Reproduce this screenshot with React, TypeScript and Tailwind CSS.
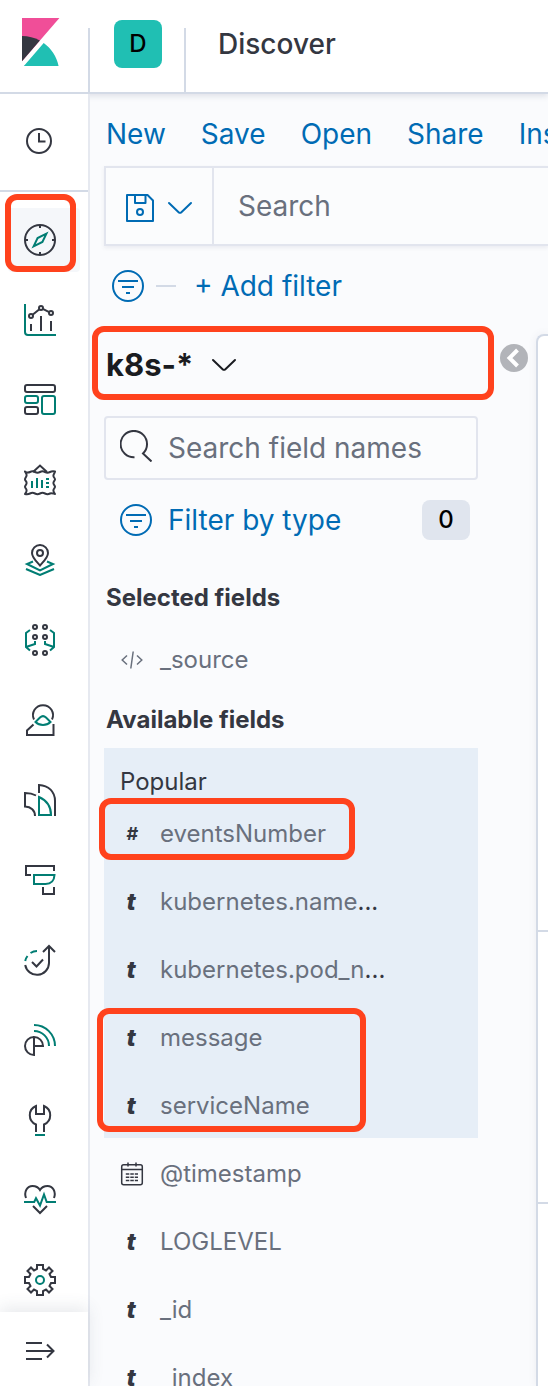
import React from "react";

const DARK = "#343741";
const GREEN = "#017d73";
const BLUE = "#006bb4";

function AppIcon({ children }: { children: React.ReactNode }) {
  return (
    <svg width="32" height="32" viewBox="0 0 32 32" fill="none" stroke={DARK} strokeWidth="2" aria-hidden="true">
      {children}
    </svg>
  );
}

const apps: { name: string; icon: React.ReactNode }[] = [
  {
    name: "Discover",
    icon: (
      <>
        <circle cx="16" cy="16" r="15" />
        <path d="M16 1v3M16 28v3M1 16h3M28 16h3" />
        <path stroke={GREEN} d="M9.6 22.4 13.6 14 22.4 9.6 18.4 18z" />
      </>
    ),
  },
  {
    name: "Visualize",
    icon: (
      <>
        <path stroke={GREEN} d="M1 0v28a3 3 0 0 0 3 3h28" />
        <circle cx="7" cy="12" r="2" />
        <circle cx="17" cy="4" r="2" />
        <circle cx="27" cy="9" r="2" />
        <path d="M8.6 10.7 15.4 5.3M18.8 4.9 25.2 8.1M7 20v7M17 12v15M27 17v10" />
      </>
    ),
  },
  {
    name: "Dashboard",
    icon: (
      <>
        <rect x="1" y="1" width="30" height="7" rx="2" />
        <rect x="1" y="23" width="13" height="7" rx="2" />
        <rect stroke={GREEN} x="1" y="12" width="13" height="7" rx="2" />
        <rect stroke={GREEN} x="18" y="12" width="13" height="18" rx="2" />
      </>
    ),
  },
  {
    name: "Canvas",
    icon: (
      <>
        <path d="M9 8 16 1.5 23 8" />
        <path
          strokeLinejoin="round"
          d="M1 7.500c1.700 1.300 3.500 1.300 5 .5s3.500-.8 5 0 3.500.8 5 0 3.500-.8 5 0 3.500.8 5 0 3.300-.8 5-.5c-.3 1.700-1.600 2.500-1.600 4.200s1.600 2.300 1.600 3.600-1.600 2-1.600 3.700 1.600 2.300 1.600 3.700-1.600 2.300-1.600 3.700.8 2.500 1.600 3.600c-1.700-.3-3.500-1.300-5-.5s-3.500.8-5 0-3.500-.8-5 0-3.500.8-5 0-3.500-.8-5 0-3.300.8-5 .5c.8-1.200 1.600-2.200 1.600-3.600s-1.600-2.300-1.600-3.700 1.600-2 1.600-3.700-1.600-2.300-1.600-3.600 1.600-2.500 1.600-4.200S1.800 9 1 7.500z"
        />
        <path stroke={GREEN} d="M8 17v7M13 14v10M18 16v8M22 15h3M22 19h3M22 23h3" />
      </>
    ),
  },
  {
    name: "Maps",
    icon: (
      <>
        <path d="M16 21.500C12 17 8 13.500 8 9a8 8 0 0 1 16 0c0 4.500-4 8-8 12.500z" />
        <circle cx="16" cy="9" r="3" />
        <path stroke={GREEN} d="M9 17.500 3 20l13 6.500L29 20l-6-2.500M2 25l14 6 14-6" />
      </>
    ),
  },
  {
    name: "Machine Learning",
    icon: (
      <>
        <circle cx="11" cy="3" r="2" />
        <circle cx="21" cy="3" r="2" />
        <circle cx="11" cy="13" r="2" />
        <circle cx="21" cy="13" r="2" />
        <circle cx="11" cy="29" r="2" />
        <circle cx="21" cy="29" r="2" />
        <path stroke={GREEN} d="M6 6 2 9v14l4 3.500M2 23l9-3v-3M26 6l4 3v14l-4 3.500M30 23l-9-3v-3" />
      </>
    ),
  },
  {
    name: "Metrics",
    icon: (
      <>
        <path d="M10 15.500a10 10 0 1 1 18 0" />
        <path d="M9.500 20.500 3 26.500V31h26.500V20" />
        <path stroke={GREEN} d="M11.500 18 16 13.500q3-2.800 6 0L26.500 18c-4 4-11 4-15 0z" />
      </>
    ),
  },
  {
    name: "Logs",
    icon: (
      <>
        <path d="M15 9V1c9.500.5 16 6.500 16 16v15" />
        <path d="M12 11.500C9 9.800 5 9 1 9v13.500c6 .2 10 4 10 9.500" />
        <path stroke={GREEN} d="M15 13v18h12c0-8-4-14.500-12-18z" />
      </>
    ),
  },
  {
    name: "APM",
    icon: (
      <>
        <path d="M30 7V2H2v9h5M19 23v7h11v-7" />
        <path stroke={GREEN} d="M10 11h20.500c-.3 5.500-3.500 9-9 9H10z" />
      </>
    ),
  },
  {
    name: "Uptime",
    icon: (
      <>
        <path d="M1.200 21A12 12 0 0 0 25 19V2M19 8l6-6 6 6M8 18l4.500 4.500L19 15.500" />
        <path stroke={GREEN} d="M1.200 17Q1.600 14.500 3.500 12M6.500 9Q9.500 7 13 7" />
      </>
    ),
  },
  {
    name: "SIEM",
    icon: (
      <>
        <path d="M10 13a9 9 0 0 0 0 18V13a9 9 0 0 1 9 9h-9" />
        <path stroke={GREEN} d="M10 7a15 15 0 0 1 15 15M10 1a21 21 0 0 1 21 21" />
      </>
    ),
  },
  {
    name: "Dev Tools",
    icon: (
      <>
        <path d="M12 28v-7.500A10 10 0 0 1 12 2v8h8V2a10 10 0 0 1 0 18.500V28" />
        <path stroke={GREEN} d="M11 31h10" />
      </>
    ),
  },
  {
    name: "Stack Monitoring",
    icon: (
      <>
        <path d="M2 14C-.5 7.500 3.500 2 8.500 2c3.500 0 6 1.500 7.500 4 1.500-2.500 4-4 7.500-4 5 0 9 5.500 6.500 12M9 22l7 7 7-7" />
        <path stroke={GREEN} d="M0 18h10.200L12 14.200l4 7.300L20 10.500l2.700 7.500H32" />
      </>
    ),
  },
  {
    name: "Management",
    icon: (
      <>
        <path d="M13 1h6v4l3 1.500 3-3L28.500 7l-3 3 1.500 3h4v6h-4l-1.500 3 3 3-3.500 3.500-3-3-3 1.500v4h-6v-4l-3-1.500-3 3L3.500 25l3-3L5 19H1v-6h4l1.500-3-3-3L7 3.500l3 3L13 5z" />
        <circle stroke={GREEN} cx="16" cy="16" r="4" />
      </>
    ),
  },
];

function FilterIcon() {
  return (
    <svg width="32" height="32" viewBox="0 0 32 32" fill="none" stroke={BLUE} strokeWidth="2" aria-hidden="true">
      <circle cx="16" cy="16" r="15" />
      <path d="M6 11h20M10 17h12M14 23h4" />
    </svg>
  );
}

function Caret({ color }: { color: string }) {
  return (
    <svg width="26" height="14" viewBox="0 0 26 14" fill="none" stroke={color} strokeWidth="2" strokeLinecap="round" aria-hidden="true">
      <path d="m2 2 9.600 9.200q1.400 1.200 2.800 0L24 2" />
    </svg>
  );
}

type Kind = "source" | "number" | "string" | "date";

function FieldIcon({ kind }: { kind: Kind }) {
  if (kind === "source") {
    return (
      <svg width="24" height="24" viewBox="0 0 24 24" fill="none" stroke="#69707d" strokeWidth="1.500" aria-hidden="true">
        <path d="M7 7.500 2.200 12 7 16.500M17 7.500l4.800 4.500-4.800 4.500M13.200 3.500l-2.400 17" />
      </svg>
    );
  }
  if (kind === "date") {
    return (
      <svg width="24" height="24" viewBox="0 0 24 24" fill="none" stroke={DARK} strokeWidth="1.500" aria-hidden="true">
        <rect x="1.700" y="2.700" width="20.600" height="20" rx="2" />
        <path d="M2 7.500h20M8 .5v4M16 .5v4" />
        <path strokeDasharray="3.500 1" d="M5.800 12H18M5.800 15.300H18M5.800 18.600H18" />
      </svg>
    );
  }
  if (kind === "number") {
    return <span className="w-6 text-center text-lg leading-6 font-bold text-[#343741] italic">#</span>;
  }
  return <span className="w-6 pr-0.5 text-center text-2xl leading-6 font-extrabold text-[#343741] italic">t</span>;
}

function Field({ kind, name, cut }: { kind: Kind; name: string; cut?: boolean }) {
  return (
    <li className="flex h-[68px] items-center gap-4 pt-1 pl-4 text-2xl text-[#343741]">
      <FieldIcon kind={kind} />
      <button type="button" className="text-left leading-8">
        <span className="text-[#69707d]">{name}</span>
        {cut && "..."}
      </button>
    </li>
  );
}

function Mark({ className }: { className: string }) {
  return <span aria-hidden="true" className={`pointer-events-none absolute z-10 rounded-xl border-6 border-[#ff421d] ${className}`} />;
}

function Header() {
  return (
    <header className="relative z-20 flex h-[94px] shrink-0 border-b-2 border-[#d3dae6] bg-white shadow-[0_2px_6px_rgba(60,70,100,0.15)]">
      <a href="#home" aria-label="Kibana home" className="w-[88px] shrink-0 pt-[18px] pl-4">
        <svg width="48" height="48" viewBox="0 0 32 32" aria-hidden="true">
          <path fill="#f04e98" d="M4 0v28.789L28.935.017z" />
          <path fill="#343741" d="M4 12v16.789l11.906-13.738A24.721 24.721 0 0 0 4 12" />
          <path fill="#20bfb3" d="M18.479 16.664 6.268 30.754l-1.073 1.237h23.191c-1.252-6.292-4.883-11.719-9.908-15.327" />
        </svg>
      </a>
      <div className="mt-7 flex w-[98px] shrink-0 justify-center border-x-2 border-[#d3dae6] pl-0.5">
        <button type="button" aria-label="Default space" className="-mt-2 size-12 rounded-lg bg-[#20bfb3] text-2xl font-medium text-black">
          D
        </button>
      </div>
      <h1 className="pt-6 pl-8 text-[28px] leading-10 font-medium text-[#343741]">Discover</h1>
    </header>
  );
}

function SideNav() {
  return (
    <nav aria-label="Main" className="relative z-20 flex w-[90px] shrink-0 flex-col border-r-2 border-[#e6e9f0] bg-white">
      <div className="flex h-[98px] shrink-0 items-center border-b-2 border-[#d3dae6] pb-0.5 pl-[26px]">
        <button type="button" aria-label="Recently viewed">
          <svg width="26" height="26" viewBox="0 0 26 26" fill="none" stroke={DARK} strokeWidth="2" aria-hidden="true">
            <circle cx="13" cy="13" r="12" />
            <path d="M13 5v8.500h6.500" />
          </svg>
        </button>
      </div>
      <ul className="flex min-h-0 flex-1 flex-col gap-4 overflow-hidden pt-4">
        {apps.map((app, i) => (
          <li key={app.name} className="shrink-0 px-2">
            <a href="#app" aria-label={app.name} className={`flex h-16 items-center rounded pl-4 ${i === 0 ? "bg-[#f5f7fa]" : ""}`}>
              <AppIcon>{app.icon}</AppIcon>
            </a>
          </li>
        ))}
      </ul>
      <Mark className="top-[100px] left-[5px] h-[78px] w-[71px]" />
      <div className="relative h-[74px] shrink-0 bg-white pt-6 pl-6 shadow-[0_-4px_16px_rgba(60,70,100,0.12)]">
        <button type="button" aria-label="Expand navigation">
          <AppIcon>
            <path d="M2 7h16M2 15h27M2 23h16M23 8.500l6.500 6.500-6.500 6.500" />
          </AppIcon>
        </button>
      </div>
    </nav>
  );
}

function QueryBar() {
  return (
    <>
      <div className="flex h-[72px] items-center gap-[35px] overflow-hidden pt-2 pl-0.5 text-[28px] whitespace-nowrap text-[#006bb4]">
        {["New", "Save", "Open", "Share", "Inspect"].map((label) => (
          <button type="button" key={label}>
            {label}
          </button>
        ))}
      </div>
      <div className="flex h-20 border-2 border-r-0 border-[#e2e5ee] bg-[#fbfcfd] shadow-[0_2px_4px_rgba(60,70,100,0.08)]">
        <button type="button" aria-label="Saved queries" className="flex w-[108px] shrink-0 items-center gap-[13px] border-r-2 border-[#e2e5ee] pt-1 pl-5">
          <svg width="28" height="28" viewBox="0 0 28 28" fill="none" stroke={BLUE} strokeWidth="2" strokeLinejoin="round" aria-hidden="true">
            <path d="M1 1h20.500L27 6.500V27H1z" />
            <path d="M9 1v8h10.500V1" />
            <circle cx="14" cy="18" r="3" />
          </svg>
          <Caret color={BLUE} />
        </button>
        <input aria-label="Search" placeholder="Search" className="min-w-0 flex-1 bg-transparent pl-6 text-[28px] outline-none placeholder:text-[#69707d]" />
      </div>
      <div className="flex h-20 items-center pl-2 text-[28px] text-[#006bb4]">
        <button type="button" aria-label="Filter options">
          <FilterIcon />
        </button>
        <span className="mr-[18px] ml-3 h-0.5 w-5 bg-[#d3dae6]" />
        <button type="button">+ Add filter</button>
      </div>
    </>
  );
}

function FieldList() {
  return (
    <aside className="w-[374px] shrink-0">
      <div className="relative">
        <button type="button" className="flex h-[74px] items-center gap-[18px] pt-1 pl-0.5 text-[31px] font-bold text-[#1a1c21]">
          k8s-*
          <Caret color="#1a1c21" />
        </button>
        <Mark className="inset-y-0 -right-4 -left-3" />
      </div>
      <div className="mt-4 flex h-16 items-center rounded border-2 border-[#e2e5ee] bg-[#fbfcfd] pl-3.5">
        <svg width="32" height="32" viewBox="0 0 32 32" fill="none" stroke={DARK} strokeWidth="2" aria-hidden="true" className="mb-1 shrink-0">
          <path d="M14.500 27.300A13.200 13.200 0 1 1 27 14.500q0 5-4 9l8.500 8" />
        </svg>
        <input
          aria-label="Search field names"
          placeholder="Search field names"
          className="min-w-0 flex-1 bg-transparent pl-4 text-[28px] outline-none placeholder:text-[#69707d]"
        />
      </div>
      <button type="button" className="flex h-20 w-full items-center pr-2 pl-4 text-[28px] text-[#006bb4]">
        <FilterIcon />
        <span className="pl-4">Filter by type</span>
        <span className="ml-auto flex h-10 w-12 items-center justify-center rounded-lg bg-[#e0e5ee] text-2xl font-medium text-black">0</span>
      </button>
      <h2 className="mt-[22px] pl-0.5 text-2xl leading-8 font-bold text-[#343741]">Selected fields</h2>
      <ul className="pt-2.5">
        <Field kind="source" name="_source" />
      </ul>
      <h2 className="mt-3 pl-0.5 text-2xl leading-8 font-bold text-[#343741]">Available fields</h2>
      <div className="relative mt-3 bg-[#e6eef7]">
        <h3 className="h-[50px] pt-[18px] pl-4 text-2xl leading-8 text-[#343741]">Popular</h3>
        <ul>
          <Field kind="number" name="eventsNumber" />
          <Field kind="string" name="kubernetes.name" cut />
          <Field kind="string" name="kubernetes.pod_n" cut />
          <Field kind="string" name="message" />
          <Field kind="string" name="serviceName" />
        </ul>
        <Mark className="top-[50px] -left-[5px] h-[62px] w-64" />
        <Mark className="bottom-1.5 -left-[7px] h-[124px] w-[269px]" />
      </div>
      <ul>
        <Field kind="date" name="@timestamp" />
        <Field kind="string" name="LOGLEVEL" />
        <Field kind="string" name="_id" />
        <Field kind="string" name="_index" />
      </ul>
    </aside>
  );
}

export default function App() {
  return (
    <div className="flex h-screen flex-col overflow-hidden bg-[#fafbfd] font-['Inter',sans-serif]">
      <Header />
      <div className="flex min-h-0 flex-1">
        <SideNav />
        <main className="flex min-w-0 flex-1 flex-col overflow-hidden pl-3.5">
          <QueryBar />
          <div className="flex min-h-0 flex-1 items-start">
            <FieldList />
            <button type="button" aria-label="Toggle sidebar" className="mt-[18px] ml-[22px] shrink-0">
              <svg width="28" height="28" viewBox="0 0 28 28" fill="none" aria-hidden="true">
                <circle cx="14" cy="14" r="14" fill="#b2b4b9" />
                <path d="m17.500 6-8 8 8 8" stroke="#fff" strokeWidth="4" />
              </svg>
            </button>
            <section aria-label="Results" className="mt-2 ml-2 flex min-w-0 flex-1 flex-col self-stretch rounded-tl-lg border-t-2 border-l-2 border-[#d3dae6] bg-white shadow-[0_0_8px_rgba(60,70,100,0.08)]">
              <div className="h-[596px] shrink-0 border-b-2 border-[#d3dae6]" />
              <div className="h-[272px] shrink-0 border-b-2 border-[#d3dae6]" />
            </section>
          </div>
        </main>
      </div>
    </div>
  );
}
